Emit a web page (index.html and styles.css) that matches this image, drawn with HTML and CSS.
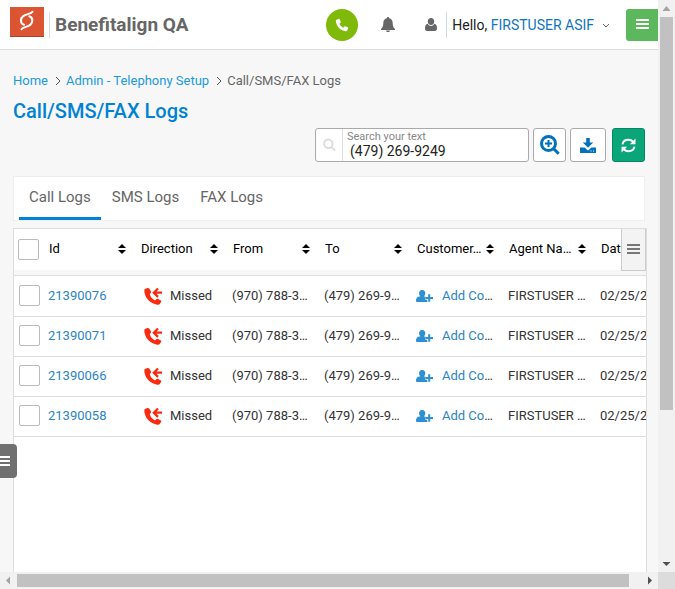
FILE: index.html
```html
<!DOCTYPE html>
<html lang="en">
<head>
<meta charset="utf-8">
<meta name="viewport" content="width=device-width, initial-scale=1">
<title>Call/SMS/FAX Logs</title>
<link rel="stylesheet" href="styles.css">
</head>
<body>
<svg class="sprite" aria-hidden="true">
  <symbol id="phone" viewBox="0 0 16 16"><path d="M4.200 1 1.600 2C1 2.400.9 3 1 4c.6 5.600 5.400 10.400 11 11 1 .1 1.600 0 2-.6l1-2.600c.1-.5 0-.8-.5-1.100l-2.700-1.300c-.5-.2-.8-.1-1.100.3L9.500 11C7.600 10.100 5.900 8.400 5 6.500l1.300-1.200c.4-.3.500-.6.3-1.100L5.300 1.500C5 1 4.700.9 4.200 1z"/></symbol>
  <symbol id="missed" viewBox="0 0 18 18"><path d="M3.700 1 1.500 1.800C.5 2.200.2 3 .3 4c.5 7 6 12.700 13 13.700 1.200.1 2-.1 2.600-1l1.300-2c.2-.5.1-.8-.3-1.100l-3.200-1.800c-.5-.2-.9-.1-1.200.2L11 13.400C8.500 12.300 6.500 10 5.700 7.300l1.200-1.500c.3-.4.3-.7.1-1.200L5.200 1.400C4.800 1 4.300.8 3.700 1z"/><path d="M18 5.700h-7.500M14 1.500 9.800 5.700l4.200 4.200" fill="none" stroke="currentColor" stroke-width="2.300"/></symbol>
  <symbol id="sort" viewBox="0 0 8 10"><path d="M4 0 8 4H0zM4 10 0 6h8z"/></symbol>
  <symbol id="adduser" viewBox="0 0 17 13"><path d="M6.200 0C8.200 0 9.300 1.500 9.300 3.300c0 1.400-.6 2.500-1.500 3.200h1.700v3h2V12H1.300C.4 12 0 11.500 0 10.700c0-2.200.8-4 3-4.300l1.400.1C3.600 5.800 3.100 4.700 3.100 3.300 3.100 1.500 4.200 0 6.200 0z"/><path d="M13.200 4.200v7.600M9.400 8H17" stroke="#fff" stroke-width="3.200"/><path d="M13.200 4.200v7.600M9.400 8H17" stroke="currentColor" stroke-width="2"/></symbol>
  <symbol id="bars" viewBox="0 0 13 11"><path d="M0 0h13v2H0zM0 4h13v2H0zM0 8h13v2H0z"/></symbol>
</svg>
<div class="window">
  <div class="page">
    <header class="topbar">
      <svg class="logo" viewBox="0 0 34 30" role="img" aria-label="Benefitalign"><path fill="#dc5532" d="M0 0h34v30H0z"/><path fill="#a5432b" d="M0 29h34v1H0z"/><path d="M22.500 4.800C20.500 8 11 6.500 11 13.500c0 2 1 3.700 3 4.300M11.500 22.300C13.500 19 22.300 20.500 22.300 13.500c0-2-1-3.700-3-4.300" fill="none" stroke="#fff" stroke-width="2" stroke-linecap="round"/></svg>
      <span class="brand">Benefitalign QA</span>
      <button class="call" aria-label="Call"><svg><use href="#phone"/></svg></button>
      <button class="plain bell" aria-label="Notifications"><svg viewBox="0 0 14 15"><path d="M7 0c.7 0 1.100.5 1.100 1.200C10.600 1.700 11.700 3.600 11.700 6c0 3.200.8 4.800 2.300 6v1H0v-1c1.500-1.200 2.300-2.800 2.300-6 0-2.400 1.100-4.300 3.600-4.800C5.900.5 6.300 0 7 0zM5 13.500h4c-.2 1-1 1.500-2 1.500s-1.800-.5-2-1.500z"/></svg></button>
      <svg class="person" viewBox="0 0 12 13"><path d="M6 0c2 0 3.200 1.500 3.200 3.400C9.200 5.500 8 7 6 7S2.800 5.500 2.800 3.400C2.800 1.500 4 0 6 0zM2.700 5.800C3.500 7.200 4.600 8 6 8s2.500-.8 3.300-2.200C11.300 6 12 8.300 12 10.600 12 12.200 11.300 13 10 13H2c-1.300 0-2-.8-2-2.400 0-2.300.7-4.600 2.700-4.800z"/></svg>
      <p class="hello">Hello, <a href="#">FIRSTUSER ASIF<svg viewBox="0 0 8 6"><path d="m1 1 3 3 3-3"/></svg></a></p>
      <button class="menu" aria-label="Menu"><svg><use href="#bars"/></svg></button>
    </header>
    <main>
      <nav class="crumbs" aria-label="Breadcrumb"><a href="#">Home</a><svg viewBox="0 0 6 8"><path d="m1 0 4 4-4 4"/></svg><a href="#">Admin - Telephony Setup</a><svg viewBox="0 0 6 8"><path d="m1 0 4 4-4 4"/></svg><span>Call/SMS/FAX Logs</span></nav>
      <h1>Call/SMS/FAX Logs</h1>
      <div class="tools">
        <div class="search">
          <svg class="glass" viewBox="0 0 13 13"><circle cx="5.300" cy="5.300" r="4.200"/><path d="m8.500 8.500 3.600 3.600"/></svg>
          <div class="field"><label for="q">Search your text</label><input id="q" type="text" value="(479) 269-9249"></div>
        </div>
        <button class="tool" aria-label="Advanced search"><svg class="zoom" viewBox="0 0 20 20"><circle cx="8.500" cy="8.500" r="7"/><path d="M8.500 5v7M5 8.500h7"/><path class="handle" d="m13.700 13.700 5 5"/></svg></button>
        <button class="tool wide" aria-label="Download"><svg class="download" viewBox="0 0 16 15"><path d="M6.200 0h3.600v4.500h3.400L8 9.800 2.800 4.500h3.400z"/><path d="M0 9.500h4.500L8 12.500l3.500-3H16V15H0z"/><path fill="#fff" d="M10.500 12.500h1v1h-1zM13 12.500h1v1h-1z"/></svg></button>
        <button class="tool refresh" aria-label="Refresh"><svg viewBox="0 0 15 15"><path class="arc" d="M1.500 6.400C2 3.600 4.500 1.800 7.500 1.800c1.900 0 3.500.8 4.600 2M13.500 8.600c-.5 2.800-3 4.600-6 4.600-1.900 0-3.500-.8-4.600-2"/><path d="M14.500.5v5.700H8.800zM.5 14.500V8.800h5.700z"/></svg></button>
      </div>
      <nav class="tabs" aria-label="Log type"><a class="on" href="#">Call Logs</a><a href="#">SMS Logs</a><a href="#">FAX Logs</a></nav>
      <section class="grid">
        <button class="columns" aria-label="Choose columns"><svg><use href="#bars"/></svg></button>
        <table>
          <colgroup><col class="pick"><col span="7"></colgroup>
          <thead><tr>
            <th><input type="checkbox" aria-label="Select all"></th>
            <th><div><span>Id</span><svg><use href="#sort"/></svg></div></th>
            <th><div><span>Direction</span><svg><use href="#sort"/></svg></div></th>
            <th><div><span>From</span><svg><use href="#sort"/></svg></div></th>
            <th><div><span>To</span><svg><use href="#sort"/></svg></div></th>
            <th><div><span>Customer…</span><svg><use href="#sort"/></svg></div></th>
            <th><div><span>Agent Na…</span><svg><use href="#sort"/></svg></div></th>
            <th><div><span>Dat</span></div></th>
          </tr></thead>
          <tbody>
            <tr><td><input type="checkbox" aria-label="Select 21390076"></td><td><a href="#">21390076</a></td><td><svg class="miss"><use href="#missed"/></svg>Missed</td><td>(970) 788-3…</td><td>(479) 269-9…</td><td><svg class="add"><use href="#adduser"/></svg><a href="#">Add Co</a>…</td><td>FIRSTUSER …</td><td>02/25/2</td></tr>
            <tr><td><input type="checkbox" aria-label="Select 21390071"></td><td><a href="#">21390071</a></td><td><svg class="miss"><use href="#missed"/></svg>Missed</td><td>(970) 788-3…</td><td>(479) 269-9…</td><td><svg class="add"><use href="#adduser"/></svg><a href="#">Add Co</a>…</td><td>FIRSTUSER …</td><td>02/25/2</td></tr>
            <tr><td><input type="checkbox" aria-label="Select 21390066"></td><td><a href="#">21390066</a></td><td><svg class="miss"><use href="#missed"/></svg>Missed</td><td>(970) 788-3…</td><td>(479) 269-9…</td><td><svg class="add"><use href="#adduser"/></svg><a href="#">Add Co</a>…</td><td>FIRSTUSER …</td><td>02/25/2</td></tr>
            <tr><td><input type="checkbox" aria-label="Select 21390058"></td><td><a href="#">21390058</a></td><td><svg class="miss"><use href="#missed"/></svg>Missed</td><td>(970) 788-3…</td><td>(479) 269-9…</td><td><svg class="add"><use href="#adduser"/></svg><a href="#">Add Co</a>…</td><td>FIRSTUSER …</td><td>02/25/2</td></tr>
          </tbody>
        </table>
      </section>
    </main>
  </div>
  <div class="bar vertical"><svg class="off" viewBox="0 0 17 17"><path d="m8.500 6 4 5h-8z"/></svg><div class="track"><div class="thumb"></div></div><svg viewBox="0 0 17 17"><path d="m8.500 11-4-4h8z"/></svg></div>
  <div class="bar horizontal"><svg class="off" viewBox="0 0 17 17"><path d="m6 8.500 4-4v8z"/></svg><div class="track"><div class="thumb"></div></div><svg viewBox="0 0 17 17"><path d="m11 8.500-4-4v8z"/></svg></div>
  <div class="corner"></div>
</div>
<button class="drawer" aria-label="Open side menu"><svg><use href="#bars"/></svg></button>
</body>
</html>
```
FILE: styles.css
```css
* { box-sizing: border-box; }
body { margin: 0; font: 13px/20px Roboto, sans-serif; color: #333; background: #f7f7f7; }
a { color: #0f75bc; text-decoration: none; }
button { padding: 0; border: 0; display: flex; align-items: center; justify-content: center; font: inherit; }
svg { fill: currentColor; display: block; flex: none; }
.sprite { position: absolute; width: 0; height: 0; }

.window { height: 100vh; display: grid; grid-template-columns: minmax(0, 1fr) 17px; grid-template-rows: minmax(0, 1fr) 17px; }
.page { display: flex; flex-direction: column; overflow: hidden; }

.topbar { flex: none; display: flex; align-items: center; height: 50px; padding-left: 10px; background: #fff; border-bottom: 1px solid #ddd; color: #666; }
.logo { width: 34px; height: 30px; margin: 0 5px 5px 0; }
.brand { border-left: 1px solid #ddd; padding-left: 5px; margin-right: auto; font-size: 19px; font-weight: 700; line-height: 26px; color: #666; white-space: nowrap; }
.call { width: 32px; height: 32px; border-radius: 50%; background: #7fba0a; color: #fff; }
.call svg { width: 14px; height: 14px; }
.plain { background: none; color: #666; }
.bell { margin: 0 30px 0 23px; }
.bell svg { width: 14px; height: 15px; }
.person { width: 12px; height: 13px; margin-right: 9px; }
.hello { margin: 0; padding-left: 5px; border-left: 1px solid #cfdbe4; font-size: 14px; line-height: 26px; color: #222; white-space: nowrap; }
.hello svg { display: inline-block; width: 8px; height: 6px; margin: 0 0 1px 8px; fill: none; stroke: #666; }
.menu { width: 32px; height: 32px; margin-left: 16px; border-radius: 3px 0 0 3px; background: #5cb85c; color: #fff; }
.menu svg, .columns svg, .drawer svg { width: 13px; height: 11px; }

main { flex: 1; min-height: 0; display: flex; flex-direction: column; padding: 21px 11px 0 13px; }
.crumbs { display: flex; align-items: center; color: #666; white-space: nowrap; }
.crumbs a { color: #1c9ae0; }
.crumbs svg { width: 6px; height: 8px; margin: 0 5px 0 7px; fill: none; stroke: #555; overflow: visible; }
h1 { margin: 7px 0 4px; font-size: 20px; line-height: 26px; font-weight: 500; color: #0082d5; }
.tools { display: flex; justify-content: flex-end; gap: 4px; padding-right: 2px; }
.search { display: flex; width: 214px; height: 34px; border: 1px solid #aaa; border-radius: 3px; background: #fff; }
.glass { width: 27px; height: 32px; padding: 0 6px 0 7px; border-right: 1px solid #ddd; fill: none; stroke: #ddd; stroke-width: 2; }
.field { flex: 1; min-width: 0; display: flex; flex-direction: column; padding-left: 4px; }
.field label { font-size: 11px; line-height: 15px; color: #888; }
.field input { min-width: 0; height: 15px; padding: 0 3px; border: 0; background: none; outline: 0; font: 14px/15px Roboto, sans-serif; color: #222; }
.tool { width: 33px; height: 34px; border: 1px solid #aaa; border-radius: 3px; background: #fff; color: #0072bc; }
.wide { width: 36px; }
.zoom { width: 20px; height: 20px; fill: none; stroke: #0072bc; stroke-width: 2; }
.zoom circle { stroke-width: 3; }
.zoom .handle { stroke-width: 3; }
.download { width: 16px; height: 15px; }
.refresh { margin-left: 2px; border-color: #078761; background: #0aa579; color: #fff; }
.refresh svg { width: 15px; height: 15px; }
.arc { fill: none; stroke: #fff; stroke-width: 2; }

.tabs { flex: none; display: flex; gap: 1px; height: 45px; margin: 14px 2px 7px 0; padding-left: 5px; border: 1px solid #eee; background: #fff; }
.tabs a { padding: 10px 10px 0; font-size: 15px; line-height: 20px; color: #666; white-space: nowrap; }
.tabs .on { border-bottom: 3px solid #0082d5; }

.grid { position: relative; flex: 1; min-height: 0; overflow: hidden; border: 1px solid #ddd; border-bottom: 0; background: #fff; }
.columns { position: absolute; top: -1px; right: 0; width: 25px; height: 43px; border: 1px solid #ccc; background: #f3f3f3; color: #777; }
table { width: 674px; table-layout: fixed; border-collapse: separate; border-spacing: 0; }
.pick { width: 30px; }
th { height: 46px; padding: 0 10px 2px 5px; border-bottom: 5px solid #f7f7f7; font-weight: 400; text-align: left; color: #000; }
th div { display: flex; align-items: center; gap: 2px; }
th span { flex: 1; white-space: nowrap; }
th svg { width: 8px; height: 10px; }
td { height: 40px; padding: 0 4px 2px; border-bottom: 1px solid #ddd; white-space: nowrap; }
tbody tr:first-child td { height: 42px; padding-bottom: 1px; border-top: 1px solid #ddd; }
td a { color: #2a84c6; }
td .miss, td .add { display: inline-block; vertical-align: middle; }
.miss { width: 18px; height: 18px; margin: 0 8px 0 4px; color: #fa2b0e; }
.add { width: 17px; height: 13px; margin-right: 9px; color: #2e90d0; }
th:first-child, td:first-child { padding-left: 5px; padding-right: 0; }
th:first-child { padding-left: 4px; padding-bottom: 0; }
input[type=checkbox] { appearance: none; display: block; width: 21px; height: 21px; margin: 0; border: 1px solid #bbb; border-radius: 2px; background: #fff; }

.drawer { position: fixed; left: 0; top: 444px; width: 17px; height: 34px; justify-content: flex-start; border-radius: 0 4px 4px 0; background: #707070; color: #fff; }
.drawer svg { margin-left: -3px; }

.bar { display: flex; background: #f1f1f1; color: #505050; }
.bar svg { width: 17px; height: 17px; }
.bar .off { color: #a3a3a3; }
.vertical { flex-direction: column; }
.track { flex: 1; }
.vertical .track { padding: 0 2px; }
.horizontal .track { padding: 2px 0; }
.thumb { background: #c1c1c1; }
.vertical .thumb { height: 73%; }
.horizontal .thumb { height: 13px; width: 98%; }
.corner { background: #dcdcdc; }
```
